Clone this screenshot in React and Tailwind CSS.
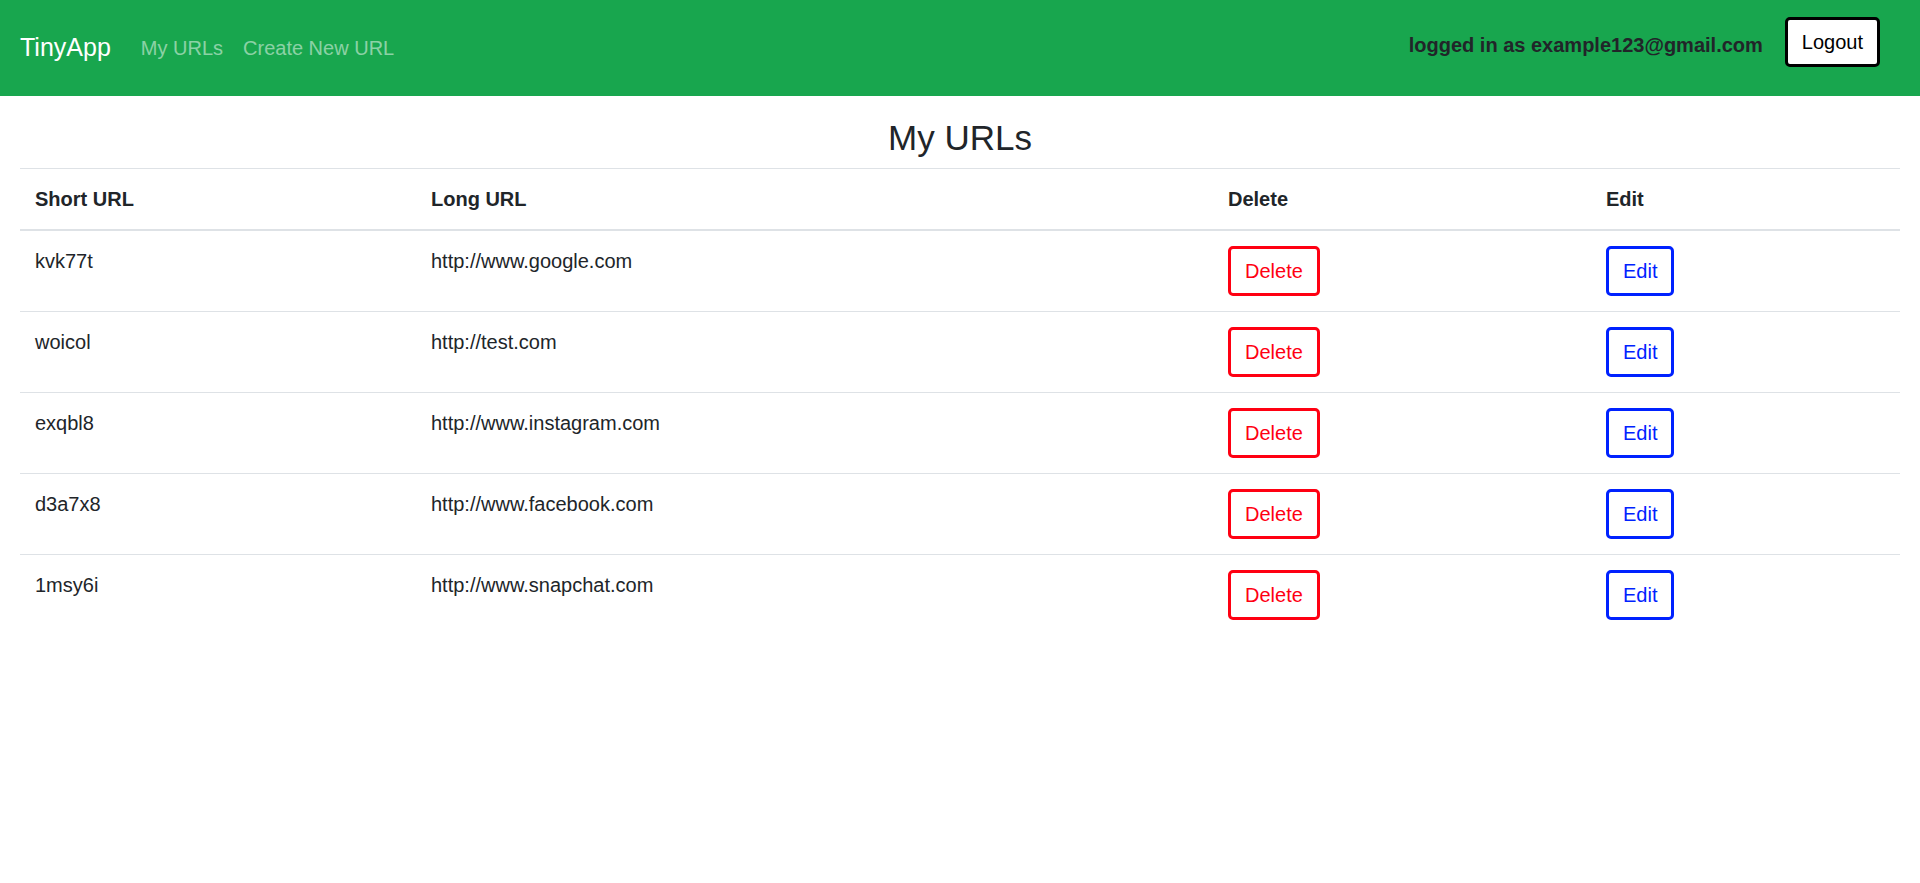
import React from "react";

const urls = [
  { short: "kvk77t", long: "http://www.google.com" },
  { short: "woicol", long: "http://test.com" },
  { short: "exqbl8", long: "http://www.instagram.com" },
  { short: "d3a7x8", long: "http://www.facebook.com" },
  { short: "1msy6i", long: "http://www.snapchat.com" },
];

const Navbar = () => (
  <nav className="flex h-[96px] items-start justify-between bg-[#18a64e] pl-[20px] pr-[40px]">
    <div className="flex h-full items-center">
      <a href="#" className="mr-[20px] py-[6px] text-[25px] leading-[37.5px] text-white">
        TinyApp
      </a>
      <a href="#" className="px-[10px] text-[20px] leading-[30px] text-white/50">
        My URLs
      </a>
      <a href="#" className="px-[10px] text-[20px] leading-[30px] text-white/50">
        Create New URL
      </a>
    </div>
    <div className="flex items-start pt-[17px]">
      <span className="mt-[13px] text-[20px] font-bold leading-[30px] text-[#212529]">
        logged in as example123@gmail.com
      </span>
      <button className="ml-[22px] h-[50px] rounded-[5px] border-[3px] border-black bg-white px-[14px] text-[20px] leading-[30px] text-black">
        Logout
      </button>
    </div>
  </nav>
);

export default function App() {
  return (
    <div className="min-h-screen bg-white font-['Liberation_Sans',Arial,sans-serif] text-[#212529]">
      <Navbar />

      <h3 className="mt-[21px] mb-[9px] text-center text-[35px] font-normal leading-[42px]">
        My URLs
      </h3>

      <div className="px-[20px]">
        <table className="w-full table-fixed border-collapse text-left text-[20px] leading-[30px]">
          <colgroup>
            <col className="w-[396px]" />
            <col className="w-[797px]" />
            <col className="w-[378px]" />
            <col />
          </colgroup>
          <thead>
            <tr>
              <th className="border-t border-b-2 border-[#dee2e6] p-[15px] font-bold">Short URL</th>
              <th className="border-t border-b-2 border-[#dee2e6] p-[15px] font-bold">Long URL</th>
              <th className="border-t border-b-2 border-[#dee2e6] p-[15px] font-bold">Delete</th>
              <th className="border-t border-b-2 border-[#dee2e6] p-[15px] font-bold">Edit</th>
            </tr>
          </thead>
          <tbody>
            {urls.map((u) => (
              <tr key={u.short}>
                <td className="border-t border-[#dee2e6] p-[15px] align-top">{u.short}</td>
                <td className="border-t border-[#dee2e6] p-[15px] align-top">{u.long}</td>
                <td className="border-t border-[#dee2e6] p-[15px] align-top">
                  <button className="h-[50px] rounded-[5px] border-[3px] border-[#ff0012] px-[14px] leading-[30px] text-[#ff0012]">
                    Delete
                  </button>
                </td>
                <td className="border-t border-[#dee2e6] p-[15px] align-top">
                  <button className="h-[50px] rounded-[5px] border-[3px] border-[#0022ff] px-[14px] leading-[30px] text-[#0022ff]">
                    Edit
                  </button>
                </td>
              </tr>
            ))}
          </tbody>
        </table>
      </div>
    </div>
  );
}
